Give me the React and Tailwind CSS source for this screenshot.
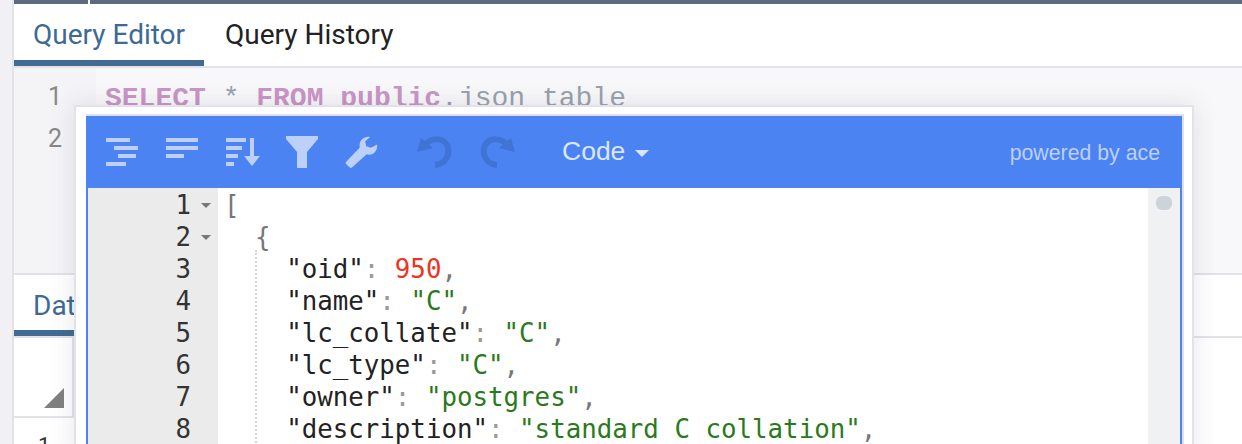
import React from 'react';

const lines = [
  [['[', 'text-[#777]']],
  [['  {', 'text-[#777]']],
  [['    ', ''], ['"oid"', 'text-[#222]'], [': ', 'text-[#999]'], ['950', 'text-[#ee3322]'], [',', 'text-[#777]']],
  [['    ', ''], ['"name"', 'text-[#222]'], [': ', 'text-[#999]'], ['"C"', 'text-[#2a7a1c]'], [',', 'text-[#777]']],
  [['    ', ''], ['"lc_collate"', 'text-[#222]'], [': ', 'text-[#999]'], ['"C"', 'text-[#2a7a1c]'], [',', 'text-[#777]']],
  [['    ', ''], ['"lc_type"', 'text-[#222]'], [': ', 'text-[#999]'], ['"C"', 'text-[#2a7a1c]'], [',', 'text-[#777]']],
  [['    ', ''], ['"owner"', 'text-[#222]'], [': ', 'text-[#999]'], ['"postgres"', 'text-[#2a7a1c]'], [',', 'text-[#777]']],
  [['    ', ''], ['"description"', 'text-[#222]'], [': ', 'text-[#999]'], ['"standard C collation"', 'text-[#2a7a1c]'], [',', 'text-[#777]']],
];

const FormatIcon = () => (
  <svg width="32" height="28" viewBox="0 0 32 28" fill="#bcd0f9">
    <rect x="0" y="0" width="24" height="4" />
    <rect x="8" y="8" width="24" height="4" />
    <rect x="12" y="16" width="18" height="4" />
    <rect x="0" y="24" width="20" height="4" />
  </svg>
);

const CompactIcon = () => (
  <svg width="32" height="28" viewBox="0 0 32 28" fill="#bcd0f9">
    <rect x="0" y="0" width="32" height="4" />
    <rect x="0" y="8" width="32" height="4" />
    <rect x="0" y="16" width="18" height="4" />
  </svg>
);

const SortIcon = () => (
  <svg width="34" height="28" viewBox="0 0 34 28" fill="#bcd0f9">
    <rect x="0" y="0" width="20" height="4" />
    <rect x="0" y="8" width="16" height="4" />
    <rect x="0" y="16" width="12" height="4" />
    <rect x="0" y="24" width="8" height="4" />
    <rect x="24" y="0" width="4" height="20" />
    <path d="M18 18 H34 L26 28 Z" />
  </svg>
);

const FilterIcon = () => (
  <svg width="32" height="32" viewBox="0 0 32 32" fill="#bcd0f9">
    <path d="M0 0 H32 V3 L21 16 V32 H11 V16 L0 3 Z" />
  </svg>
);

const WrenchIcon = () => (
  <svg width="33" height="32" viewBox="0 0 32 32" fill="#bcd0f9">
    <path d="M31.500 8.500c.6 3-.3 6-2.400 8-2.200 2.100-5.200 2.700-7.900 1.800L6.500 31.500c-.7.600-1.700.600-2.300 0L.600 28c-.6-.7-.6-1.700.1-2.300L14.300 11.500C13.600 8.500 14.400 5.500 16.500 3.300 18.700 1.200 21.800.300 24.700 1l-5 4.200 1 5 4.800 1.500Z" />
  </svg>
);

const UndoIcon = ({ flip }) => (
  <svg width="35" height="32" viewBox="0 0 35 32" fill="none" className={flip ? '-scale-x-100' : ''}>
    <path d="M8 9 C13 2 25 1 30 9 C34 17 29 28 18 29" stroke="#3f74d4" strokeWidth="6" />
    <path d="M0 16 L4 2 L16 12 Z" fill="#3f74d4" />
  </svg>
);

const TabLabel = ({ active, children, className }) => (
  <div className={`h-full flex items-center pt-[6px] border-b-[6px] ${active ? 'border-[#426a93] text-[#3d6a94]' : 'border-transparent text-[#222]'} ${className}`}>
    {children}
  </div>
);

const App = () => {
  return (
    <div className="relative w-[1242px] h-[444px] overflow-hidden bg-[#f1f1f5] font-['Roboto',sans-serif]">
      <div className="ml-[12px] h-full border-l-2 border-[#e2e2e8] bg-white flex flex-col">
        {/* dark strip over the tabs */}
        <div className="h-[4px] flex shrink-0">
          <div className="w-[74px] bg-[#5d6b7e]" />
          <div className="w-[2px] bg-white" />
          <div className="flex-1 bg-[#5d6b7e]" />
        </div>

        <div className="h-[64px] flex text-[28px] leading-none border-b-2 border-[#e2e2e8] shrink-0">
          <TabLabel active className="w-[190px] pl-[19px]">Query Editor</TabLabel>
          <TabLabel className="ml-[21px]">Query History</TabLabel>
        </div>

        {/* sql editor behind the dialog */}
        <div className="h-[207px] flex bg-[#f8f8fa] shrink-0 border-b-2 border-[#e2e2e8]">
          <div className="w-[82px] bg-[#f4f4f7] pr-[34px] pt-[8px] text-right text-[25px] leading-[42px] text-[#888]">
            <div>1</div>
            <div>2</div>
          </div>
          <div className="pl-[9px] pt-[15px] font-['Liberation_Mono',monospace] text-[28px] leading-[32px] text-[#9aa1ac]">
            <span className="font-bold text-[#c995c5]">SELECT</span> * <span className="font-bold text-[#c995c5]">FROM</span> <span className="font-bold text-[#c995c5]">public</span>.json_table
          </div>
        </div>

        <div className="h-[63px] flex text-[28px] leading-none shrink-0 border-b-2 border-[#e2e2e8]">
          <TabLabel active className="w-[190px] pl-[19px]">Data Output</TabLabel>
        </div>

        <div className="h-[80px] w-[60px] relative border-b-2 border-r-2 border-[#e2e2e8] shrink-0">
          <div className="absolute left-[30px] top-[50px] w-0 h-0 border-l-[20px] border-b-[20px] border-l-transparent border-b-[#808080]" />
        </div>
        <div className="pl-[24px] pt-[12px] text-[22px] leading-[32px] text-[#333]">1</div>
      </div>

      {/* json editor dialog */}
      <div className="absolute left-[74px] top-[105px] w-[1120px] h-[360px] bg-white border-2 border-[#e2e2e8] pt-[7px] pl-[10px] pr-[8px] shadow-[0_0_24px_rgba(60,60,90,0.12)]">
        <div className="h-full border-t-2 border-r-2 border-[#e0e0e6]">
          <div className="h-full border-x-2 border-[#4b83f2] flex flex-col">
            <div className="h-[72px] -mx-[2px] bg-[#4b83f2] flex items-center pl-[20px] pr-[22px] shrink-0">
              <div className="flex items-center gap-[28px]">
                <FormatIcon />
                <CompactIcon />
                <SortIcon />
                <div className="-ml-[2px]"><FilterIcon /></div>
                <div className="-ml-[1px]"><WrenchIcon /></div>
              </div>
              <div className="flex items-center gap-[28px] ml-[39px]">
                <UndoIcon />
                <UndoIcon flip />
              </div>
              <div className="ml-[47px] flex items-center gap-[10px] font-['Liberation_Sans',sans-serif] text-[26.5px] text-[#dbe6fc]">
                Code
                <span className="w-0 h-0 mt-[2px] border-x-[7px] border-t-[7px] border-x-transparent border-t-[#dbe6fc]" />
              </div>
              <div className="ml-auto pt-[4px] font-['Liberation_Sans',sans-serif] text-[21.3px] text-[#bcd0f9]">powered by ace</div>
            </div>

            <div className="flex-1 flex font-['DejaVu_Sans_Mono',monospace] text-[25.8px] leading-[32px] overflow-hidden">
              <div className="w-[130px] shrink-0 bg-[#ebebeb] text-[#333] pt-[1px]">
                {lines.map((_, i) => (
                  <div key={i} className="relative pr-[27px] text-right">
                    {i + 1}
                    {i < 2 && <span className="absolute right-[7px] top-[14px] w-0 h-0 border-x-[5px] border-t-[5px] border-x-transparent border-t-[#777]" />}
                  </div>
                ))}
              </div>
              <div className="flex-1 pl-[6px] pt-[1px] whitespace-pre relative">
                <div className="absolute left-[37px] top-[62px] bottom-0 border-l-2 border-dotted border-[#d4d4d4]" />
                {lines.map((parts, i) => (
                  <div key={i}>
                    {parts.map(([text, color], j) => (
                      <span key={j} className={color}>{text}</span>
                    ))}
                  </div>
                ))}
              </div>
              <div className="w-[32px] shrink-0 bg-[#f0f1f3] pt-[8px] pl-[8px]">
                <div className="w-[16px] h-[14px] rounded-[6px] bg-[#ced2da]" />
              </div>
            </div>
          </div>
        </div>
      </div>
    </div>
  );
};

export default App;
